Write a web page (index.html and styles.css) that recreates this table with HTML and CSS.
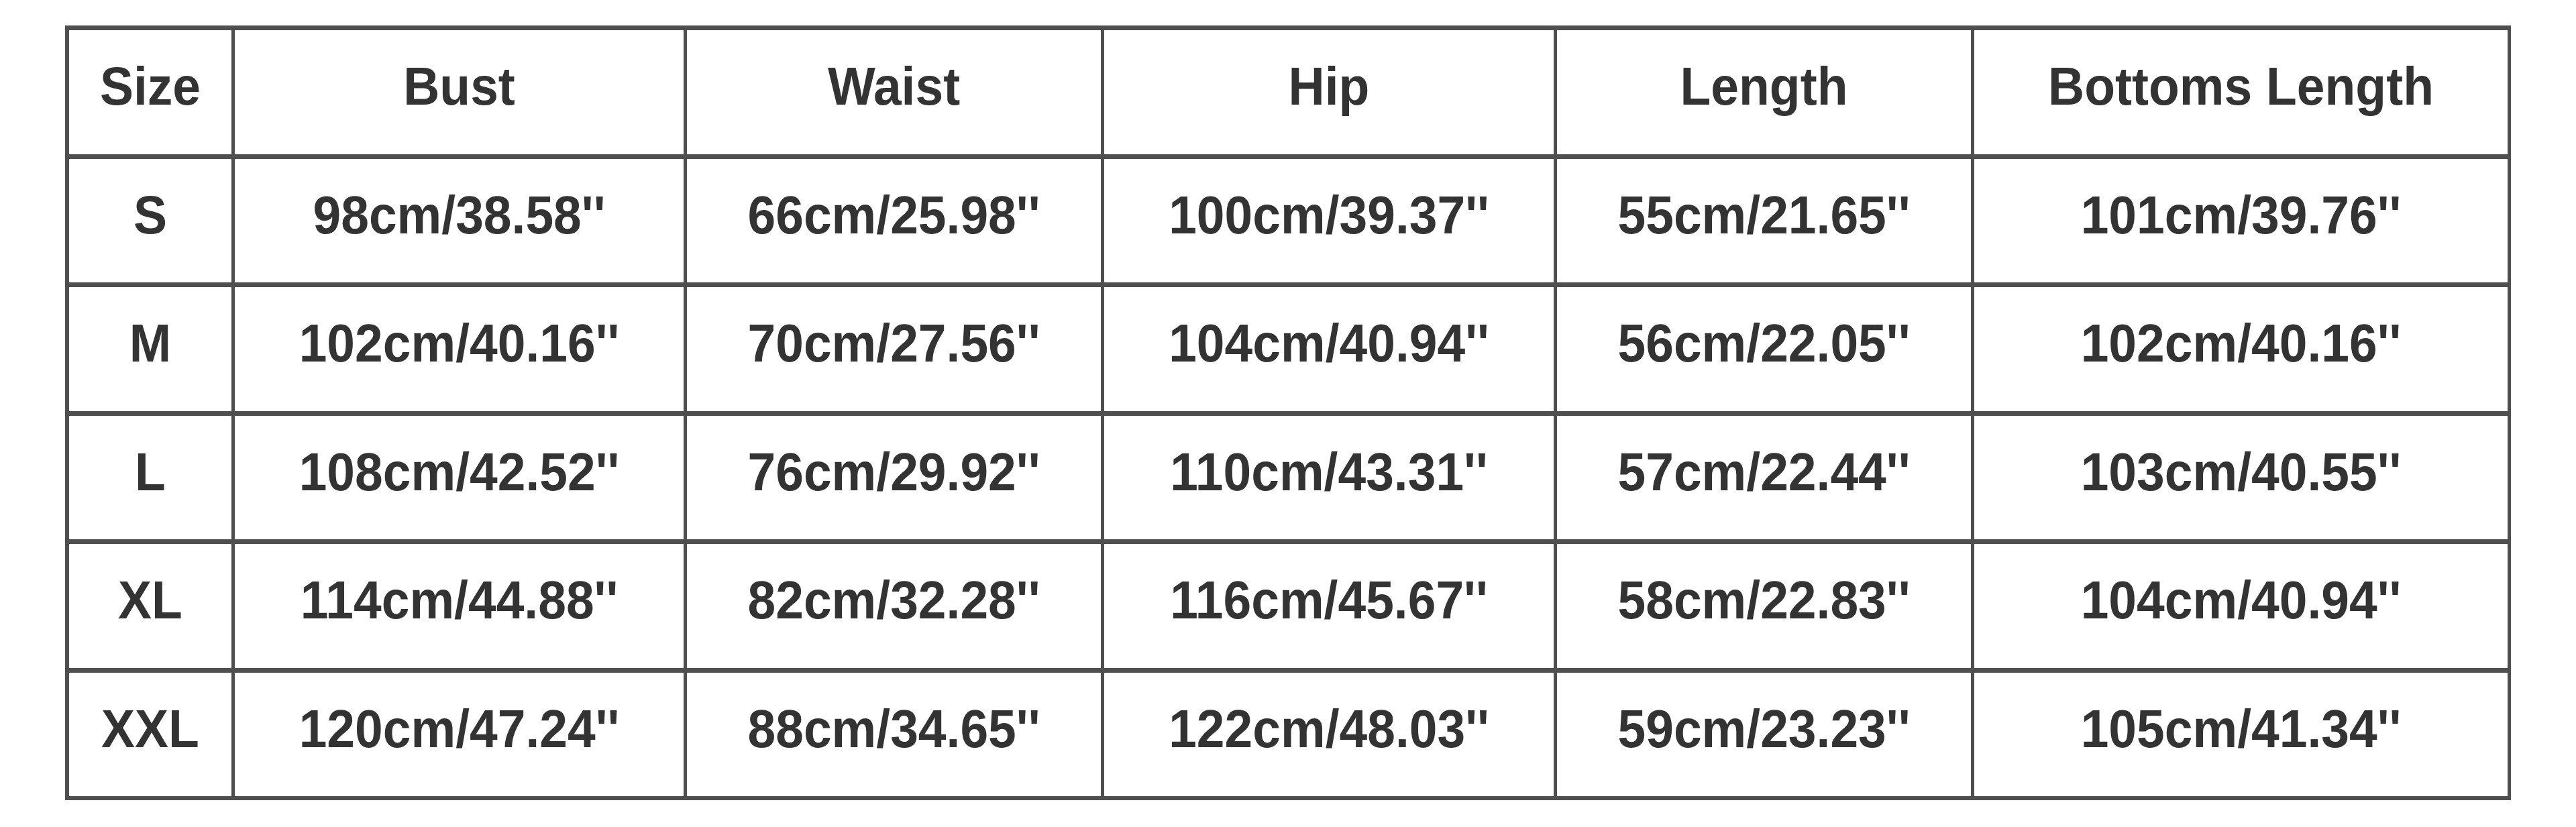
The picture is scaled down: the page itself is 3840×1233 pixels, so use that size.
FILE: index.html
```html
<!DOCTYPE html>
<html lang="en">
<head>
<meta charset="utf-8">
<title>Size Chart</title>
<link rel="stylesheet" href="styles.css">
</head>
<body>
<div class="chart">
  <div class="cell"><span class="t">Size</span></div>
  <div class="cell"><span class="t">Bust</span></div>
  <div class="cell"><span class="t">Waist</span></div>
  <div class="cell"><span class="t">Hip</span></div>
  <div class="cell"><span class="t">Length</span></div>
  <div class="cell"><span class="t">Bottoms Length</span></div>

  <div class="cell"><span class="t">S</span></div>
  <div class="cell"><span class="t">98cm/38.58''</span></div>
  <div class="cell"><span class="t">66cm/25.98''</span></div>
  <div class="cell"><span class="t">100cm/39.37''</span></div>
  <div class="cell"><span class="t">55cm/21.65''</span></div>
  <div class="cell"><span class="t">101cm/39.76''</span></div>

  <div class="cell"><span class="t">M</span></div>
  <div class="cell"><span class="t">102cm/40.16''</span></div>
  <div class="cell"><span class="t">70cm/27.56''</span></div>
  <div class="cell"><span class="t">104cm/40.94''</span></div>
  <div class="cell"><span class="t">56cm/22.05''</span></div>
  <div class="cell"><span class="t">102cm/40.16''</span></div>

  <div class="cell"><span class="t">L</span></div>
  <div class="cell"><span class="t">108cm/42.52''</span></div>
  <div class="cell"><span class="t">76cm/29.92''</span></div>
  <div class="cell"><span class="t">110cm/43.31''</span></div>
  <div class="cell"><span class="t">57cm/22.44''</span></div>
  <div class="cell"><span class="t">103cm/40.55''</span></div>

  <div class="cell"><span class="t">XL</span></div>
  <div class="cell"><span class="t">114cm/44.88''</span></div>
  <div class="cell"><span class="t">82cm/32.28''</span></div>
  <div class="cell"><span class="t">116cm/45.67''</span></div>
  <div class="cell"><span class="t">58cm/22.83''</span></div>
  <div class="cell"><span class="t">104cm/40.94''</span></div>

  <div class="cell"><span class="t">XXL</span></div>
  <div class="cell"><span class="t">120cm/47.24''</span></div>
  <div class="cell"><span class="t">88cm/34.65''</span></div>
  <div class="cell"><span class="t">122cm/48.03''</span></div>
  <div class="cell"><span class="t">59cm/23.23''</span></div>
  <div class="cell"><span class="t">105cm/41.34''</span></div>
</div>
</body>
</html>
```

FILE: styles.css
```css
html, body {
  margin: 0;
  padding: 0;
  background: #ffffff;
}

body {
  padding: 38px 0 0 97px;
  font-family: "Liberation Sans", Arial, sans-serif;
}

.chart {
  box-sizing: border-box;
  width: 3646px;
  height: 1155px;
  display: grid;
  grid-template-columns: 242px 669px 617px 670px 617px 795px;
  grid-template-rows: repeat(6, 1fr);
  column-gap: 5px;
  row-gap: 7px;
  padding: 7px 5px 6px 6px;
  background: #4f4f4f;
}

.cell {
  background: #ffffff;
  display: flex;
  align-items: center;
  justify-content: center;
  padding-bottom: 18px;
  color: #333333;
  font-weight: bold;
  font-size: 75px;
  line-height: 1.15;
  white-space: nowrap;
}

.t {
  display: inline-block;
  transform: scaleY(1.06);
}
```
